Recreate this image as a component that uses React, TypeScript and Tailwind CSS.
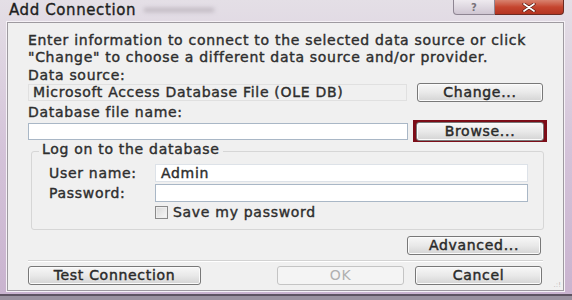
import React from "react";

// shared text look: wide, slightly heavy dialog font
const txt = "text-[14px] tracking-[0.7px] [-webkit-text-stroke:0.4px_#2e2e2e]";

function Btn({ label, w, disabled }: { label: string; w: string; disabled?: boolean }) {
  return (
    <div
      className={`${w} h-[19px] flex items-center justify-center rounded-[3px] border text-[14px] tracking-[0.7px] ${
        disabled
          ? "border-[#c4c4c4] bg-[#f4f4f4] text-[#b0b0b0]"
          : "border-[#787878] bg-gradient-to-b from-[#f7f7f7] via-[#e9e9e9] to-[#d4d4d4] text-[#2a2a2a] shadow-[inset_0_0_0_1px_#fbfbfb] [-webkit-text-stroke:0.45px_#2a2a2a]"
      }`}
    >
      {label}
    </div>
  );
}

export default function App() {
  return (
    <div className="w-[572px] h-[300px] overflow-hidden flex flex-col bg-gradient-to-b from-[#e4dfe6] via-[#d4c3d9] to-[#c9b3cf] font-['DejaVu_Sans',sans-serif] text-[#2e2e2e]">
      {/* Title bar */}
      <div className="h-[22px] flex shrink-0">
        <div className="pl-[9px] pt-[1px] text-[15px] leading-[18px] tracking-[0.6px] text-[#1e1e1e] [-webkit-text-stroke:0.35px_#1e1e1e]">
          Add Connection
        </div>
        <div className="ml-[8px] mt-[8px] w-[70px] h-[4px] bg-[#bdb6bf] blur-[2px]" />
        <div className="ml-auto mr-[8px] flex h-[15px]">
          <div className="w-[42px] flex items-center justify-center rounded-bl-[4px] border border-t-0 border-[#8e8592] bg-gradient-to-b from-[#eeeaef] to-[#cfc6d2] text-[10px] font-bold text-[#77727a]">
            ?
          </div>
          <div className="w-[69px] flex items-center justify-center rounded-br-[4px] border border-t-0 border-l-0 border-[#6b2a22] bg-gradient-to-b from-[#d8826f] via-[#c5452f] to-[#b43421]">
            <svg width="14" height="9" viewBox="0 0 14 9">
              <path d="M2 1 L12 8 M12 1 L2 8" stroke="#5a1a12" strokeWidth="3.2" strokeLinecap="round" />
              <path d="M2 1 L12 8 M12 1 L2 8" stroke="#ffffff" strokeWidth="1.7" strokeLinecap="round" />
            </svg>
          </div>
        </div>
      </div>

      {/* Client area */}
      <div className="ml-[7px] mr-[8px] h-[269px] shrink-0 bg-[#f0f0f0] border border-[#9e9aa0] shadow-[0_0_0_1px_#f5f1f6] flex flex-col pl-[20px] relative">
        <div className={`pt-[9px] leading-[17px] ${txt}`}>
          <div>Enter information to connect to the selected data source or click</div>
          <div>"Change" to choose a different data source and/or provider.</div>
        </div>

        <div className={`mt-[1px] leading-[16px] ${txt}`}>Data source:</div>
        <div className="h-[19px] flex items-center">
          <div className={`w-[379px] h-[17px] border border-[#e0e0e0] bg-[#f0f0f0] pl-[4px] leading-[15px] ${txt}`}>
            Microsoft Access Database File (OLE DB)
          </div>
          <div className="ml-[10px]">
            <Btn label="Change..." w="w-[126px]" />
          </div>
        </div>

        <div className={`mt-[2px] leading-[16px] ${txt}`}>Database file name:</div>
        <div className="h-[22px] flex items-center">
          <div className="w-[380px] h-[17px] border border-[#a9b7c6] bg-white" />
          <div className="ml-[5px] w-[134px] h-[22px] border-[3px] border-[#7c0d18] bg-[#7c0d18] flex items-center">
            <Btn label="Browse..." w="w-full" />
          </div>
        </div>

        {/* Group box */}
        <div className="mt-[9px] ml-[3px] w-[513px] h-[79px] border border-[#d6d6d6] rounded-[3px] relative flex flex-col pl-[123px]">
          <div className={`absolute left-[7px] -top-[11px] px-[3px] bg-[#f0f0f0] leading-[16px] ${txt}`}>
            Log on to the database
          </div>
          <div className="mt-[12px] flex items-center relative">
            <div className={`absolute -left-[106px] ${txt}`}>User name:</div>
            <div className={`w-[373px] h-[18px] border border-[#dde2e8] bg-white pl-[5px] leading-[16px] ${txt}`}>Admin</div>
          </div>
          <div className="mt-[2px] flex items-center relative">
            <div className={`absolute -left-[106px] ${txt}`}>Password:</div>
            <div className="w-[373px] h-[18px] border border-[#a9b7c6] bg-white" />
          </div>
          <div className="mt-[2px] flex items-center">
            <div className="w-[13px] h-[13px] border border-[#8a8a8a] bg-gradient-to-br from-[#d8d8d8] to-[#f8f8f8] shadow-[inset_0_0_0_1px_#eeeeee]" />
            <div className={`ml-[5px] leading-[16px] ${txt}`}>Save my password</div>
          </div>
        </div>

        <div className="mt-[6px] flex justify-end pr-[22px]">
          <Btn label="Advanced..." w="w-[134px]" />
        </div>

        <div className="mt-[5px] mr-[20px] h-[2px] border-t border-[#d2d2d2] border-b border-b-white" />

        <div className="mt-[4px] flex items-center">
          <Btn label="Test Connection" w="w-[173px]" />
          <div className="ml-[76px]">
            <Btn label="OK" w="w-[127px]" disabled />
          </div>
          <div className="ml-[11px]">
            <Btn label="Cancel" w="w-[127px]" />
          </div>
        </div>

        <div className="absolute right-[2px] bottom-[1px] text-[7px] leading-[7px] text-[#b8b8b8]">.:!</div>
      </div>

      <div className="mt-[3px] h-[2px] bg-[#5e5462] shrink-0" />
      <div className="flex-1 bg-[#9a92a0]" />
    </div>
  );
}
